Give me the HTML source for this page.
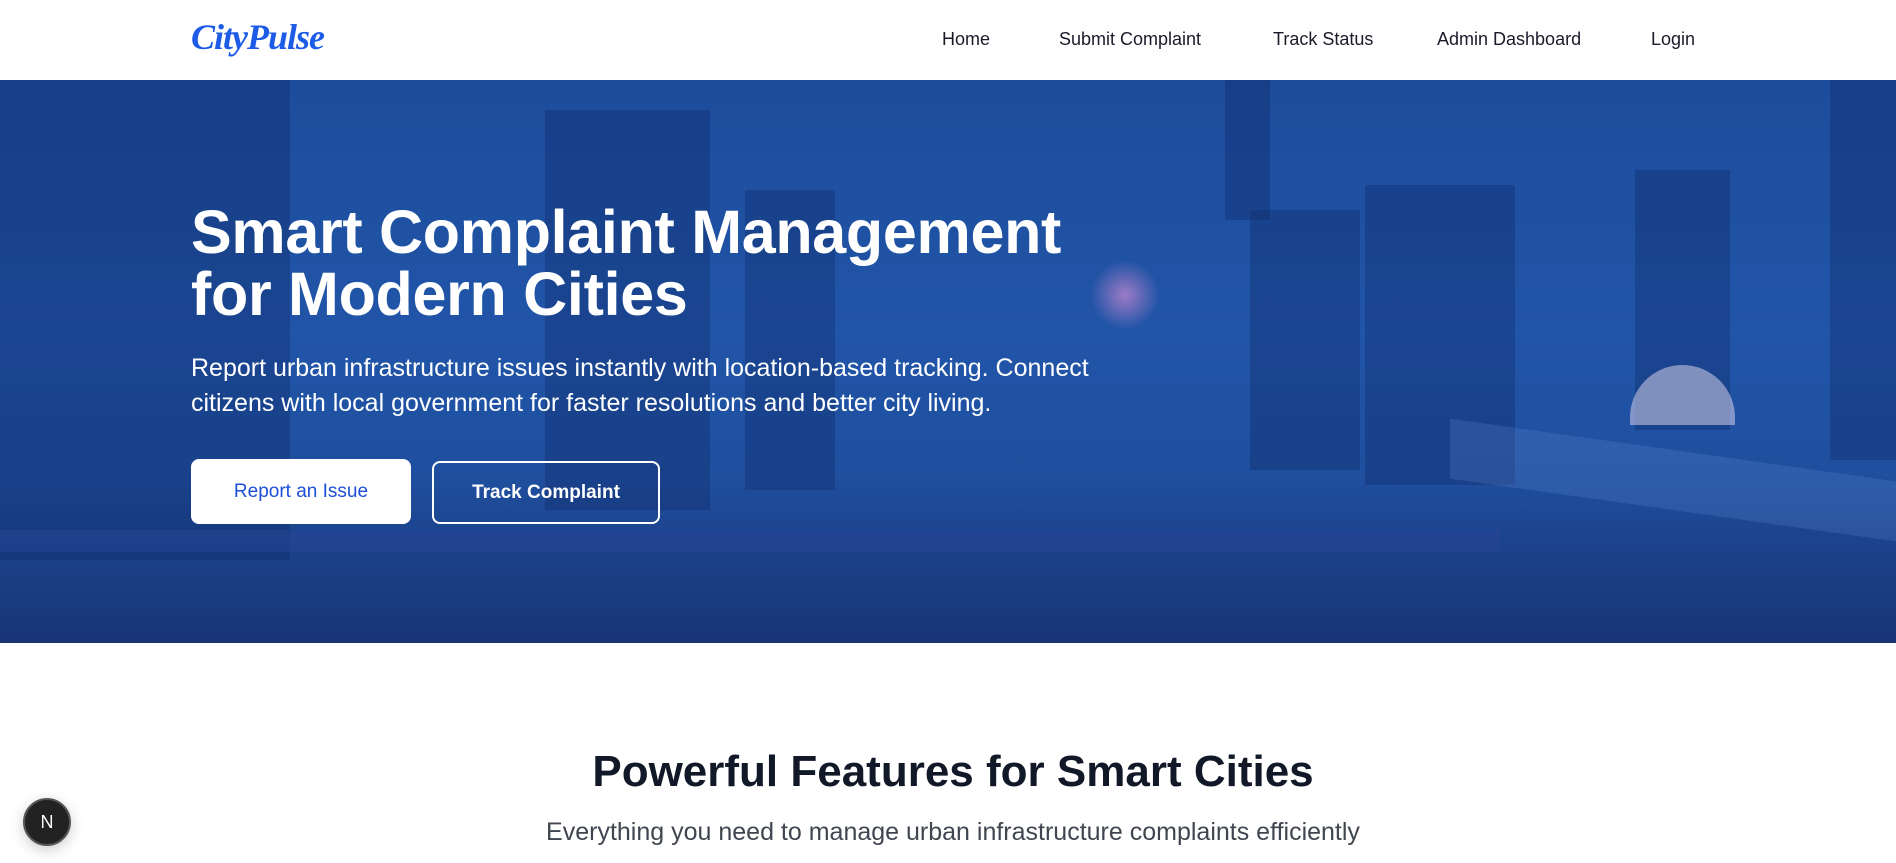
<!DOCTYPE html>
<html><head><meta charset="utf-8"><style>
*{margin:0;padding:0;box-sizing:border-box}
body{width:1896px;height:863px;overflow:hidden;background:#fff;font-family:"Liberation Sans",sans-serif;position:relative}
.nav{height:80px;position:relative;background:#fff}
.logo{position:absolute;left:191px;top:16px;font-family:"Liberation Serif",serif;font-style:italic;font-weight:bold;font-size:36px;color:#1d5ce6;letter-spacing:-1px}
.nav a{position:absolute;top:29px;font-size:18px;color:#1a1a2a;text-decoration:none}
.hero{position:absolute;left:0;top:80px;width:1896px;height:563px;overflow:hidden;
background:linear-gradient(180deg,#1d4c9c 0%,#2155a8 45%,#1f4f9f 70%,#1b3f85 100%)}
.b{position:absolute;background:rgba(15,40,100,.35)}
.l{position:absolute;background:rgba(120,160,230,.18)}
h1{position:absolute;left:191px;top:201px;color:#fff;font-size:61px;line-height:62px;font-weight:bold;letter-spacing:-0.3px}
.p{position:absolute;left:191px;top:351px;color:#fff;font-size:25px;line-height:35px}
.btn1{position:absolute;left:191px;top:459px;width:220px;height:65px;background:#fff;border-radius:8px;color:#1d4fd8;font-size:19px;text-align:center;line-height:65px}
.btn2{position:absolute;left:432px;top:461px;width:228px;height:63px;border:2px solid #fff;border-radius:8px;color:#fff;font-size:19px;font-weight:bold;text-align:center;line-height:59px}
h2{position:absolute;left:0;width:1906px;text-align:center;top:747px;font-size:44px;color:#111827;font-weight:bold}
.sub{position:absolute;left:0;width:1906px;text-align:center;top:818px;font-size:25px;color:#404650}
.n{position:absolute;left:23px;top:798px;width:48px;height:48px;border-radius:50%;background:#222;border:2px solid #555;color:#fff;font-size:18px;text-align:center;line-height:44px;box-shadow:0 4px 14px rgba(0,0,0,.2)}
</style></head><body>
<div class="nav">
<div class="logo">CityPulse</div>
<a style="left:942px">Home</a>
<a style="left:1059px">Submit Complaint</a>
<a style="left:1273px">Track Status</a>
<a style="left:1437px">Admin Dashboard</a>
<a style="left:1651px">Login</a>
</div>
<div class="hero">
<div class="b" style="left:0;top:0;width:290px;height:480px"></div>
<div class="b" style="left:545px;top:30px;width:165px;height:400px"></div>
<div class="b" style="left:745px;top:110px;width:90px;height:300px"></div>
<div class="b" style="left:1225px;top:0;width:45px;height:140px"></div>
<div class="b" style="left:1250px;top:130px;width:110px;height:260px"></div>
<div class="b" style="left:1365px;top:105px;width:150px;height:300px"></div>
<div class="b" style="left:1635px;top:90px;width:95px;height:260px"></div>
<div class="b" style="left:1830px;top:0;width:66px;height:380px"></div>
<div class="l" style="left:1630px;top:285px;width:105px;height:60px;border-radius:55px 55px 0 0;background:rgba(230,220,240,.5)"></div>
<div class="l" style="left:0;top:400px;width:1896px;height:163px;background:linear-gradient(180deg,rgba(40,60,130,.0),rgba(20,40,100,.45))"></div>
<div class="l" style="left:1450px;top:370px;width:446px;height:60px;transform:skewY(8deg)"></div>
<div class="l" style="left:0;top:450px;width:1500px;height:22px;background:rgba(40,70,150,.55)"></div>
<div class="l" style="left:1090px;top:180px;width:70px;height:70px;border-radius:50%;background:radial-gradient(circle,rgba(240,150,220,.6),rgba(120,160,240,0) 70%)"></div>
</div>
<h1>Smart Complaint Management<br>for Modern Cities</h1>
<div class="p">Report urban infrastructure issues instantly with location-based tracking. Connect<br>citizens with local government for faster resolutions and better city living.</div>
<div class="btn1">Report an Issue</div>
<div class="btn2">Track Complaint</div>
<h2>Powerful Features for Smart Cities</h2>
<div class="sub">Everything you need to manage urban infrastructure complaints efficiently</div>
<div class="n">N</div>
</body></html>
